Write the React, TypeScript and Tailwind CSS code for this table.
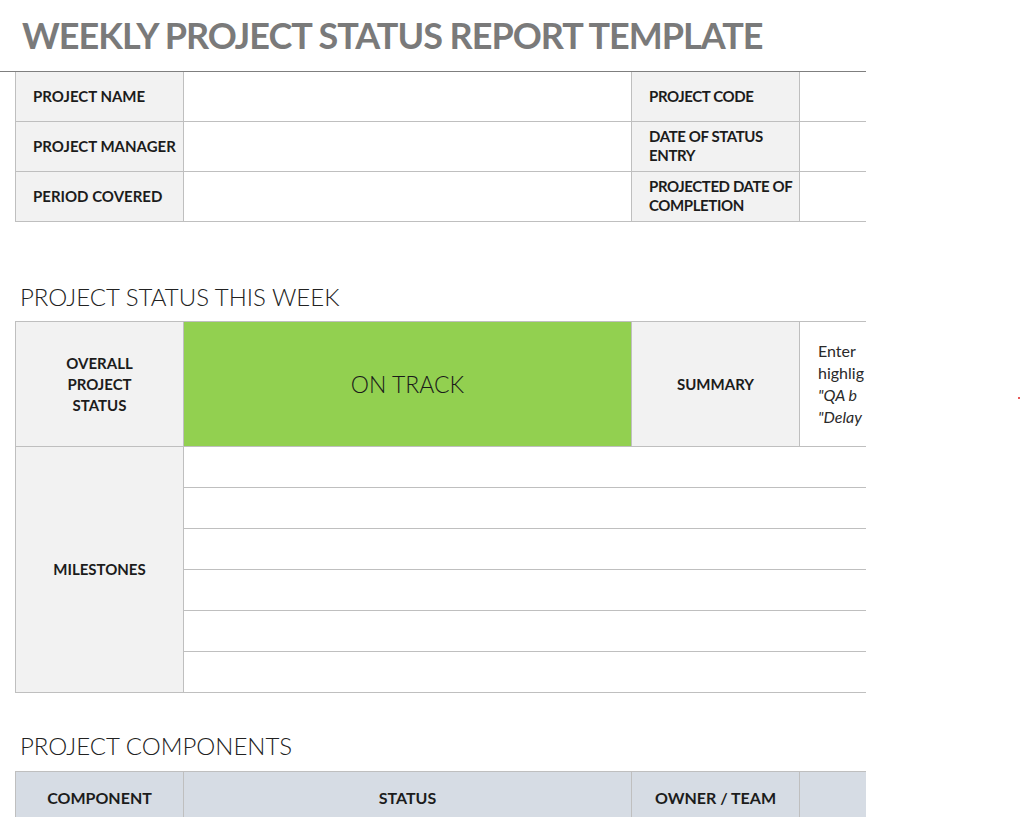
import React from "react";

const font = { fontFamily: "Lato, 'Open Sans', sans-serif" };

const cell = "border-r border-b border-[#bfbfbf]";
const label = "bg-[#f2f2f2] text-[#1c1c1c] font-bold text-[15px] leading-[19px] uppercase";

function InfoTable() {
  const rows = [
    ["PROJECT NAME", "PROJECT CODE"],
    ["PROJECT MANAGER", "DATE OF STATUS ENTRY"],
    ["PERIOD COVERED", "PROJECTED DATE OF COMPLETION"],
  ];
  return (
    <div className="ml-[15px] w-[1000px] border-l border-[#bfbfbf]">
      {rows.map(([a, b], i) => (
        <div key={i} className="grid grid-cols-[168px_448px_168px_1fr] h-[50px]">
          <div className={`${cell} ${label} flex items-center pl-[17px] whitespace-nowrap`}>{a}</div>
          <div className={cell} />
          <div className={`${cell} ${label} flex items-center pl-[17px] pb-[1px] tracking-[-0.4px]`}>{b}</div>
          <div className={cell} />
        </div>
      ))}
    </div>
  );
}

function SectionTitle({ children }: { children: React.ReactNode }) {
  return (
    <h2 className="ml-[20px] text-[24px] font-light text-[#222] leading-[26px] whitespace-nowrap">
      {children}
    </h2>
  );
}

function StatusTable() {
  return (
    <div className="ml-[15px] w-[1000px] border-l border-t border-[#bfbfbf]">
      <div className="grid grid-cols-[168px_448px_168px_1fr] h-[125px]">
        <div className={`${cell} ${label} flex items-center justify-center text-center leading-[21px]`}>
          OVERALL<br />PROJECT<br />STATUS
        </div>
        <div className={`${cell} bg-[#92d050] flex items-center justify-center text-[23px] text-[#1a1a1a] font-light`}>
          ON TRACK
        </div>
        <div className={`${cell} ${label} flex items-center justify-center`}>SUMMARY</div>
        <div className={`${cell} pl-[18px] pt-[18px] text-[16px] leading-[22px] text-[#2a2a2a] whitespace-nowrap`}>
          <div>Enter</div>
          <div>highlig</div>
          <div className="italic">"QA b</div>
          <div className="italic">"Delay</div>
        </div>
      </div>
      <div className="grid grid-cols-[168px_1fr]">
        <div className={`${cell} ${label} flex items-center justify-center`}>MILESTONES</div>
        <div>
          {[0, 1, 2, 3, 4, 5].map((i) => (
            <div key={i} className={`${cell} h-[41px]`} />
          ))}
        </div>
      </div>
    </div>
  );
}

function ComponentsTable() {
  return (
    <div className="ml-[15px] w-[1000px] border-l border-t border-[#bfbfbf]">
      <div className="grid grid-cols-[168px_448px_168px_1fr] h-[52px] bg-[#d6dce4] text-[#1c1c1c] font-bold text-[16px]">
        <div className={`${cell} flex items-center justify-center`}>COMPONENT</div>
        <div className={`${cell} flex items-center justify-center`}>STATUS</div>
        <div className={`${cell} flex items-center justify-center`}>OWNER / TEAM</div>
        <div className={cell} />
      </div>
    </div>
  );
}

export default function App() {
  return (
    <div className="relative w-[1023px] h-[817px] bg-white overflow-hidden" style={font}>
      <div className="w-[866px] overflow-hidden">
        <h1 className="pl-[22px] pt-[13px] h-[71px] text-[36px] leading-[44px] font-bold text-[#7a7a7a] tracking-[-1px] whitespace-nowrap">
          WEEKLY PROJECT STATUS REPORT TEMPLATE
        </h1>
        <div className="h-px bg-[#7f7f7f]" />
        <InfoTable />
        <div className="h-[62px]" />
        <SectionTitle>PROJECT STATUS THIS WEEK</SectionTitle>
        <div className="h-[11px]" />
        <StatusTable />
        <div className="h-[40px]" />
        <SectionTitle>PROJECT COMPONENTS</SectionTitle>
        <div className="h-[12px]" />
        <ComponentsTable />
      </div>
      <div className="absolute left-[1018px] top-[397px] w-[2px] h-[2px] rounded-full bg-[#e02020]" />
    </div>
  );
}
